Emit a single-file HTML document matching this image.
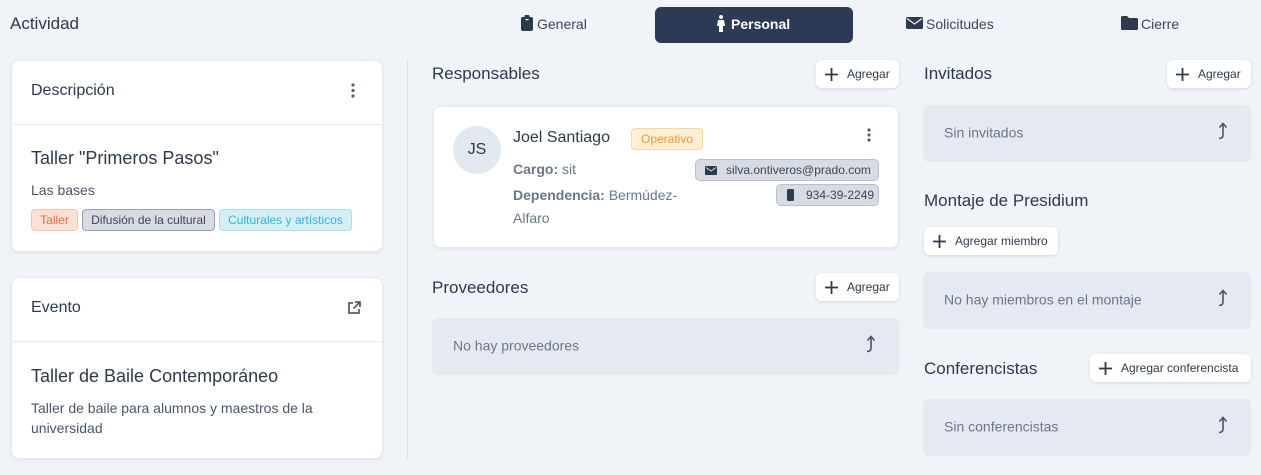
<!DOCTYPE html>
<html><head><meta charset="utf-8"><style>
*{box-sizing:border-box;margin:0;padding:0}
body{width:1261px;height:475px;background:#f0f3f8;font-family:"Liberation Sans",sans-serif;color:#2d3a4e;position:relative;overflow:hidden}
.a{position:absolute;white-space:nowrap}
.card{position:absolute;background:#fff;border-radius:8px;box-shadow:0 1px 3px rgba(0,0,0,.08);border:1px solid #e6eaf0}
.btn{position:absolute;background:#fff;border-radius:6px;box-shadow:0 1px 3px rgba(0,0,0,.12);font-size:12px;color:#2d3a4e;display:flex;align-items:center;padding-left:9px}
.btn svg{margin-right:9px}
.empty{position:absolute;background:#e5e9f1;border-radius:6px;font-size:14px;color:#6b7789}
.empty span{position:absolute;left:21px;top:50%;transform:translateY(-60%)}
.empty svg{position:absolute;right:23px;top:17px}
.h2{font-size:17px;color:#2d3a4e}
.tag{position:absolute;top:209px;height:22px;border-radius:4px;font-size:12px;line-height:20px;text-align:center;border:1px solid}
.pill{position:absolute;background:#d7dbe3;border:1px solid #b9bfca;border-radius:5px;font-size:12px;color:#3d4758;display:flex;align-items:center}
</style></head><body>
<div class="a" style="left:10px;top:14px;font-size:17px">Actividad</div>

<svg class="a" style="left:521px;top:15px" width="12" height="16" viewBox="0 0 12 16"><rect x="0" y="2" width="12" height="14" rx="2" fill="#2d3a4e"/><rect x="3.5" y="0" width="5" height="4" rx="1" fill="#2d3a4e"/><rect x="4.5" y="4" width="3" height="1.2" fill="#fff"/></svg>
<div class="a" style="left:537px;top:16px;font-size:14px;color:#3d4758">General</div>
<div class="a" style="left:655px;top:7px;width:198px;height:36px;background:#2c3a55;border-radius:6px"></div>
<svg class="a" style="left:716px;top:15px" width="10" height="17" viewBox="0 0 10 17"><circle cx="5" cy="2" r="2" fill="#fff"/><path d="M2 5h6l1 6H7v6H3v-6H1z" fill="#fff"/></svg>
<div class="a" style="left:731px;top:16px;font-size:14px;font-weight:bold;color:#fff">Personal</div>
<svg class="a" style="left:906px;top:17px" width="17" height="12" viewBox="0 0 17 12"><rect width="17" height="12" rx="1.5" fill="#2d3a4e"/><path d="M1 1.5l7.5 5.5 7.5-5.5" stroke="#f0f3f8" stroke-width="1.3" fill="none"/></svg>
<div class="a" style="left:926px;top:16px;font-size:14px;color:#3d4758">Solicitudes</div>
<svg class="a" style="left:1121px;top:16px" width="17" height="14" viewBox="0 0 17 14"><path d="M0 1.5Q0 0 1.5 0H6l2 2h7.5Q17 2 17 3.5V12.5Q17 14 15.5 14H1.5Q0 14 0 12.5z" fill="#2d3a4e"/></svg>
<div class="a" style="left:1141px;top:16px;font-size:14px;color:#3d4758">Cierre</div>

<div class="card" style="left:11px;top:60px;width:372px;height:192px"></div>
<div class="a" style="left:11px;top:124px;width:372px;height:1px;background:#e6eaf0"></div>
<div class="a" style="left:31px;top:82px;font-size:16px">Descripción</div>
<svg class="a" style="left:351px;top:83px" width="4" height="15"><circle cx="2" cy="2" r="1.6" fill="#555f6e"/><circle cx="2" cy="7.5" r="1.6" fill="#555f6e"/><circle cx="2" cy="13" r="1.6" fill="#555f6e"/></svg>
<div class="a" style="left:31px;top:148px;font-size:18px">Taller "Primeros Pasos"</div>
<div class="a" style="left:31px;top:182px;font-size:14px;color:#4a5568">Las bases</div>
<div class="tag" style="left:31px;width:47px;background:#fbe0d6;border-color:#f5c2ae;color:#ea6a3e">Taller</div>
<div class="tag" style="left:82px;width:133px;background:#d7dbe3;border-color:#9aa2af;color:#3d4758">Difusión de la cultural</div>
<div class="tag" style="left:219px;width:133px;background:#d5eff5;border-color:#a8e0ec;color:#32b5d5">Culturales y artísticos</div>

<div class="card" style="left:11px;top:277px;width:372px;height:182px"></div>
<div class="a" style="left:11px;top:341px;width:372px;height:1px;background:#e6eaf0"></div>
<div class="a" style="left:31px;top:299px;font-size:16px">Evento</div>
<svg class="a" style="left:347px;top:301px" width="14" height="14" viewBox="0 0 14 14" fill="none" stroke="#555f6e" stroke-width="1.8"><path d="M6 2H2v10h10V8M8 1h5v5M13 1L6.5 7.5"/></svg>
<div class="a" style="left:31px;top:366px;font-size:18px">Taller de Baile Contemporáneo</div>
<div class="a" style="left:31px;top:398px;font-size:14px;color:#4a5568;line-height:20px">Taller de baile para alumnos y maestros de la<br>universidad</div>

<div class="a" style="left:407px;top:60px;width:1px;height:399px;background:#dde2ea"></div>

<div class="a h2" style="left:432px;top:64px">Responsables</div>
<div class="btn" style="left:816px;top:60px;width:83px;height:28px"><svg width="13" height="13"><path d="M6.5 0v13M0 6.5h13" stroke="#2d3a4e" stroke-width="1.8"/></svg>Agregar</div>
<div class="card" style="left:433px;top:106px;width:466px;height:142px"></div>
<div class="a" style="left:453px;top:126px;width:48px;height:48px;border-radius:50%;background:#e2e8f0;font-size:16px;text-align:center;line-height:48px;color:#2d3a4e">JS</div>
<div class="a" style="left:513px;top:129px;font-size:16px">Joel Santiago</div>
<div class="a" style="left:631px;top:128px;width:72px;height:22px;background:#fdefd6;border:1px solid #fad79a;border-radius:4px;color:#f2992b;font-size:12px;text-align:center;line-height:20px">Operativo</div>
<svg class="a" style="left:867px;top:128px" width="4" height="14"><circle cx="2" cy="2" r="1.6" fill="#555f6e"/><circle cx="2" cy="7" r="1.6" fill="#555f6e"/><circle cx="2" cy="12" r="1.6" fill="#555f6e"/></svg>
<div class="a" style="left:513px;top:161px;font-size:14px;color:#6b7789"><b>Cargo:</b> sit</div>
<div class="a" style="left:513px;top:184px;font-size:14px;color:#6b7789;line-height:23px"><b>Dependencia:</b> Bermúdez-<br>Alfaro</div>
<div class="pill" style="left:695px;top:159px;width:184px;height:22px"><svg style="margin:0 9px 0 9px" width="12" height="9" viewBox="0 0 12 9"><rect width="12" height="9" rx="1" fill="#2d3a4e"/><path d="M1 1.5l5 3.5 5-3.5" stroke="#d7dbe3" fill="none"/></svg>silva.ontiveros@prado.com</div>
<div class="pill" style="left:776px;top:184px;width:103px;height:22px"><svg style="margin:0 12px 0 10px" width="7" height="12"><rect width="7" height="12" rx="1.5" fill="#2d3a4e"/></svg>934-39-2249</div>

<div class="a h2" style="left:432px;top:278px">Proveedores</div>
<div class="btn" style="left:816px;top:273px;width:83px;height:28px"><svg width="13" height="13"><path d="M6.5 0v13M0 6.5h13" stroke="#2d3a4e" stroke-width="1.8"/></svg>Agregar</div>
<div class="empty" style="left:432px;top:318px;width:467px;height:57px"><span>No hay proveedores</span><svg width="10" height="18" viewBox="0 0 10 18" fill="none" stroke="#4a5568" stroke-width="1.6"><path d="M1 16.5Q5 16.5 5 13V2M1.5 5.5L5 1.5 8.5 5.5"/></svg></div>

<div class="a h2" style="left:924px;top:64px">Invitados</div>
<div class="btn" style="left:1167px;top:60px;width:84px;height:28px"><svg width="13" height="13"><path d="M6.5 0v13M0 6.5h13" stroke="#2d3a4e" stroke-width="1.8"/></svg>Agregar</div>
<div class="empty" style="left:923px;top:105px;width:328px;height:57px"><span>Sin invitados</span><svg width="10" height="18" viewBox="0 0 10 18" fill="none" stroke="#4a5568" stroke-width="1.6"><path d="M1 16.5Q5 16.5 5 13V2M1.5 5.5L5 1.5 8.5 5.5"/></svg></div>
<div class="a h2" style="left:924px;top:191px">Montaje de Presidium</div>
<div class="btn" style="left:924px;top:227px;width:134px;height:28px"><svg width="13" height="13"><path d="M6.5 0v13M0 6.5h13" stroke="#2d3a4e" stroke-width="1.8"/></svg>Agregar miembro</div>
<div class="empty" style="left:923px;top:272px;width:328px;height:57px"><span>No hay miembros en el montaje</span><svg width="10" height="18" viewBox="0 0 10 18" fill="none" stroke="#4a5568" stroke-width="1.6"><path d="M1 16.5Q5 16.5 5 13V2M1.5 5.5L5 1.5 8.5 5.5"/></svg></div>
<div class="a h2" style="left:924px;top:359px">Conferencistas</div>
<div class="btn" style="left:1090px;top:354px;width:161px;height:28px"><svg width="13" height="13"><path d="M6.5 0v13M0 6.5h13" stroke="#2d3a4e" stroke-width="1.8"/></svg>Agregar conferencista</div>
<div class="empty" style="left:923px;top:399px;width:328px;height:57px"><span>Sin conferencistas</span><svg width="10" height="18" viewBox="0 0 10 18" fill="none" stroke="#4a5568" stroke-width="1.6"><path d="M1 16.5Q5 16.5 5 13V2M1.5 5.5L5 1.5 8.5 5.5"/></svg></div>
</body></html>
